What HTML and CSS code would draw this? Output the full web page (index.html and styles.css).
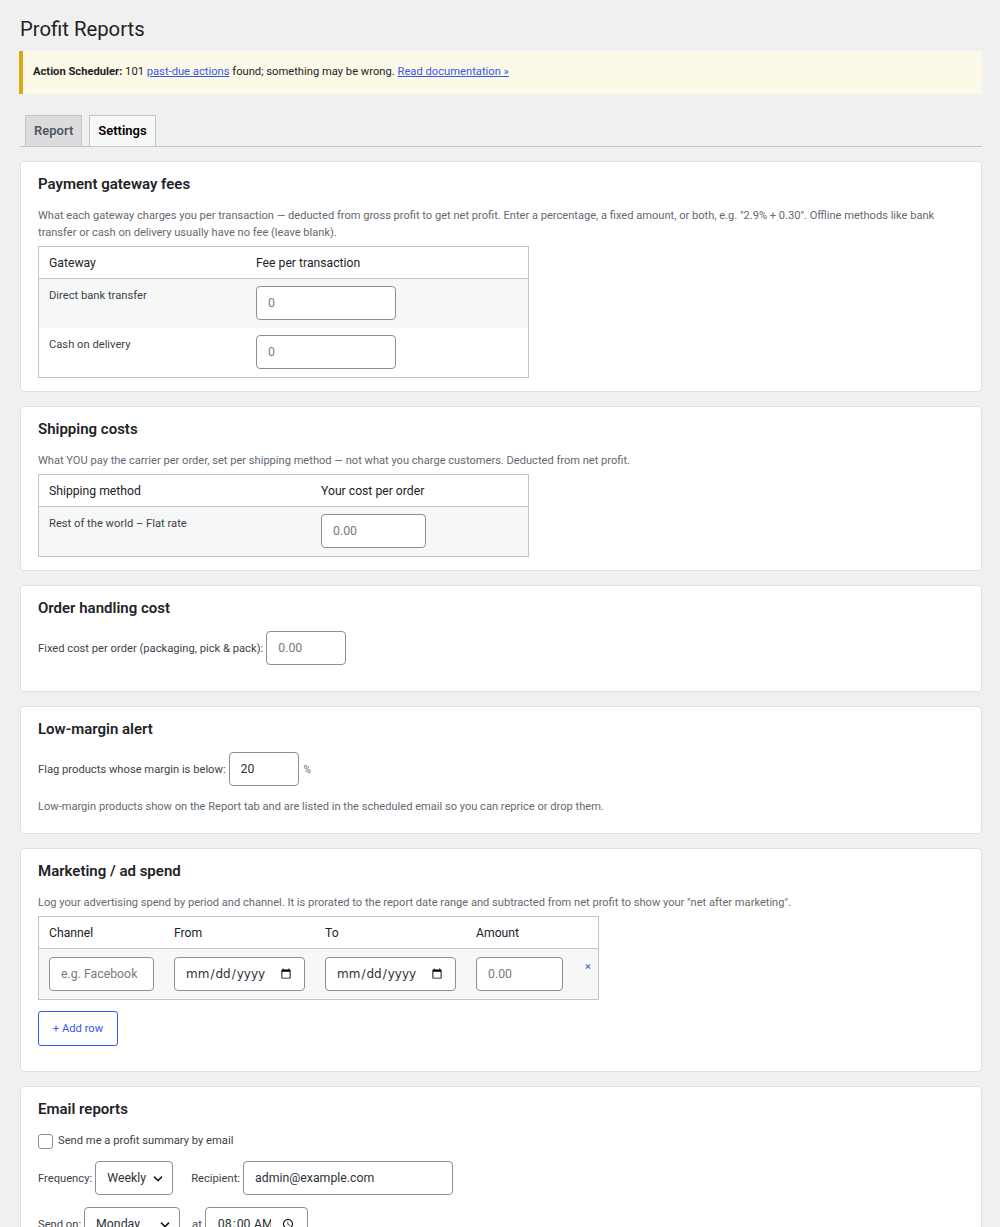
FILE: index.html
```html
<!DOCTYPE html>
<html lang="en">
<head>
    <meta charset="UTF-8">
    <meta name="viewport" content="width=device-width, initial-scale=1.0">
    <title>Profit Reports</title>
    <link rel="stylesheet" href="styles.css">
</head>
<body>
<div class="wrap">
    <h1>Profit Reports</h1>

    <div class="notice">
        <p><strong>Action Scheduler:</strong> 101 <a href="#">past-due actions</a> found; something may be wrong. <a href="#">Read documentation &raquo;</a></p>
    </div>

    <nav class="tabs">
        <a href="#" class="tab">Report</a>
        <a href="#" class="tab tab-active">Settings</a>
    </nav>

    <!-- Payment gateways -->
    <div class="card">
        <h2>Payment gateway fees</h2>
        <p class="desc">What each gateway charges you per transaction — deducted from gross profit to get net profit. Enter a percentage, a fixed amount, or both, e.g. "2.9% + 0.30". Offline methods like bank transfer or cash on delivery usually have no fee (leave blank).</p>
        <table class="grid grid-gateways">
            <thead>
                <tr>
                    <th class="col-gateway">Gateway</th>
                    <th>Fee per transaction</th>
                </tr>
            </thead>
            <tbody>
                <tr class="alt">
                    <td>Direct bank transfer</td>
                    <td><input type="text" class="field w-140" placeholder="0"></td>
                </tr>
                <tr>
                    <td>Cash on delivery</td>
                    <td><input type="text" class="field w-140" placeholder="0"></td>
                </tr>
            </tbody>
        </table>
    </div>

    <!-- Shipping -->
    <div class="card">
        <h2>Shipping costs</h2>
        <p class="desc">What YOU pay the carrier per order, set per shipping method — not what you charge customers. Deducted from net profit.</p>
        <table class="grid grid-shipping">
            <thead>
                <tr>
                    <th class="col-method">Shipping method</th>
                    <th>Your cost per order</th>
                </tr>
            </thead>
            <tbody>
                <tr class="alt">
                    <td>Rest of the world – Flat rate</td>
                    <td><input type="text" class="field w-105" placeholder="0.00"></td>
                </tr>
            </tbody>
        </table>
    </div>

    <!-- Handling -->
    <div class="card">
        <h2>Order handling cost</h2>
        <p class="row row-last">
            <label>Fixed cost per order (packaging, pick &amp; pack):</label>
            <input type="text" class="field w-80" placeholder="0.00">
        </p>
    </div>

    <!-- Low margin -->
    <div class="card">
        <h2>Low-margin alert</h2>
        <p class="row">
            <label>Flag products whose margin is below:</label>
            <input type="text" class="field w-70" value="20">
            <span class="unit">%</span>
        </p>
        <p class="desc">Low-margin products show on the Report tab and are listed in the scheduled email so you can reprice or drop them.</p>
    </div>

    <!-- Marketing -->
    <div class="card">
        <h2>Marketing / ad spend</h2>
        <p class="desc">Log your advertising spend by period and channel. It is prorated to the report date range and subtracted from net profit to show your "net after marketing".</p>
        <table class="grid grid-ads">
            <thead>
                <tr>
                    <th class="col-channel">Channel</th>
                    <th class="col-date">From</th>
                    <th class="col-date">To</th>
                    <th class="col-amount">Amount</th>
                    <th></th>
                </tr>
            </thead>
            <tbody>
                <tr class="alt">
                    <td><input type="text" class="field w-105" placeholder="e.g. Facebook"></td>
                    <td><input type="date" class="field date w-131"></td>
                    <td><input type="date" class="field date w-131"></td>
                    <td><input type="text" class="field w-87" placeholder="0.00"></td>
                    <td class="remove"><a href="#">×</a></td>
                </tr>
            </tbody>
        </table>
        <p class="actions"><button type="button" class="btn-secondary">+ Add row</button></p>
    </div>

    <!-- Email -->
    <div class="card">
        <h2>Email reports</h2>
        <p class="row row-check">
            <label class="check"><input type="checkbox"> Send me a profit summary by email</label>
        </p>
        <p class="row">
            <label>Frequency:</label>
            <select class="field select w-78">
                <option>Weekly</option>
                <option>Monthly</option>
            </select>
            <label class="gap">Recipient:</label>
            <input type="email" class="field w-210" value="admin@example.com">
        </p>
        <p class="row">
            <label>Send on:</label>
            <select class="field select w-96">
                <option>Monday</option>
                <option>Tuesday</option>
            </select>
            <label class="gap-sm">at</label>
            <input type="time" class="field time w-103" value="08:00">
        </p>
    </div>
</div>
</body>
</html>
```

FILE: styles.css
```css
body {
    margin: 0;
    background-color: #f0f0f1;
    color: #3c434a;
    font-family: Roboto, "Liberation Sans", sans-serif;
    font-size: 13px;
}
a {
    color: #3858e9;
}
.wrap {
    padding: 16px 18px 20px 20px;
}
h1 {
    margin: 0 0 9px;
    font-size: 20.3px;
    font-weight: 400;
    line-height: 26px;
    color: #1d2327;
}
.notice {
    background-color: #fcf9e8;
    border-left: 4px solid #dba617;
    padding: 0 12px 0 10px;
    margin-left: -1px;
}
.notice p {
    margin: 0;
    padding: 12px 0 13px;
    font-size: 11.2px;
    line-height: 18px;
    color: #1d2327;
}
.tabs {
    display: flex;
    gap: 7px;
    margin-top: 21px;
    padding-left: 5px;
    border-bottom: 1px solid #c3c4c7;
    margin-bottom: 14px;
}
.tab {
    display: block;
    padding: 4px 8px;
    line-height: 22px;
    font-size: 13px;
    font-weight: 600;
    color: #50575e;
    text-decoration: none;
    background-color: #dcdcde;
    border: 1px solid #c3c4c7;
    border-bottom: none;
}
.tab-active {
    background-color: #f6f7f7;
    color: #000;
}
.card {
    background-color: #fff;
    border: 1px solid #e0e0e0;
    border-radius: 4px;
    padding: 12px 17px 13px;
    margin-bottom: 14px;
}
.card h2 {
    margin: 0;
    font-size: 15px;
    font-weight: 600;
    line-height: 21px;
    color: #1d2327;
}
.desc {
    margin: 12px 0 5px;
    font-size: 11.1px;
    line-height: 17px;
    color: #646970;
}
.row {
    display: flex;
    align-items: center;
    gap: 3px;
    margin: 12px 0;
    font-size: 11.2px;
    color: #3c434a;
}
.row-last {
    margin-bottom: 13px;
}
.row + .desc {
    margin-top: 11px;
}
.row-check {
    margin: 13px 0 11px;
}
.unit {
    margin-left: 2px;
    font-size: 10px;
    color: #646970;
}
.gap {
    margin-left: 15px;
}
.gap-sm {
    margin-left: 9px;
}
.check {
    display: flex;
    align-items: center;
    gap: 5px;
    line-height: 16px;
}
.check input {
    appearance: none;
    width: 15px;
    height: 15px;
    margin: 0;
    border: 1px solid #8c8f94;
    border-radius: 3px;
    background-color: #fff;
}

/* tables */
.grid {
    border-collapse: collapse;
    border: 1px solid #c3c4c7;
    table-layout: fixed;
}
.grid th {
    text-align: left;
    font-weight: 400;
    font-size: 12.2px;
    color: #1d2327;
    height: 31px;
    padding: 0 10px;
    border-bottom: 1px solid #c3c4c7;
}
.grid td {
    vertical-align: top;
    padding: 7px 10px 8px;
    font-size: 11.2px;
    line-height: 17px;
    color: #3c434a;
}
.grid td:first-child {
    padding-top: 8px;
    padding-bottom: 7px;
}
.grid .alt td {
    background-color: #f6f7f7;
}
.grid-gateways {
    width: 491px;
}
.col-gateway {
    width: 187px;
}
.grid-shipping {
    width: 491px;
}
.col-method {
    width: 252px;
}
.grid-ads {
    width: 561px;
}
.grid-ads td,
.grid-ads td:first-child {
    padding-top: 8px;
    padding-bottom: 8px;
}
.col-channel {
    width: 105px;
}
.col-date {
    width: 131px;
}
.col-amount {
    width: 87px;
}
.grid-ads td.remove {
    padding: 9px 0 0 12px;
}
.remove a {
    font-size: 11px;
    text-decoration: none;
}

/* inputs */
.field {
    box-sizing: border-box;
    height: 34px;
    margin: 0;
    padding: 0 11px;
    border: 1px solid #8c8f94;
    border-radius: 4px;
    background-color: #fff;
    font-family: Roboto, "Liberation Sans", sans-serif;
    font-size: 12.3px;
    color: #2c3338;
}
.field::placeholder {
    color: #787c82;
}
.field.date {
    font-family: "DejaVu Sans", sans-serif;
    font-size: 12px;
    padding: 0 10px;
}
.field.time {
    padding: 0 9px 0 11px;
    font-size: 12.3px;
}
.select {
    appearance: none;
    padding: 0 24px 0 11px;
    background: #fff url("data:image/svg+xml;charset=US-ASCII,%3Csvg%20width%3D%2220%22%20height%3D%2220%22%20xmlns%3D%22http%3A%2F%2Fwww.w3.org%2F2000%2Fsvg%22%3E%3Cpath%20d%3D%22M5%207l5%205%205-5%22%20fill%3D%22none%22%20stroke%3D%22%231d2327%22%20stroke-width%3D%222%22%2F%3E%3C%2Fsvg%3E") no-repeat right 6px top 55%;
    background-size: 16px 16px;
}
.w-70 { width: 70px; }
.w-78 { width: 78px; }
.w-80 { width: 80px; }
.w-87 { width: 87px; }
.w-96 { width: 96px; }
.w-103 { width: 103px; }
.w-105 { width: 105px; }
.w-131 { width: 131px; }
.w-140 { width: 140px; }
.w-210 { width: 210px; }
.actions {
    margin: 11px 0 12px;
}
.btn-secondary {
    width: 80px;
    height: 35px;
    padding: 0;
    font-family: Roboto, "Liberation Sans", sans-serif;
    font-size: 11.2px;
    color: #3858e9;
    background-color: #fff;
    border: 1px solid #3858e9;
    border-radius: 3px;
    cursor: pointer;
}
```
